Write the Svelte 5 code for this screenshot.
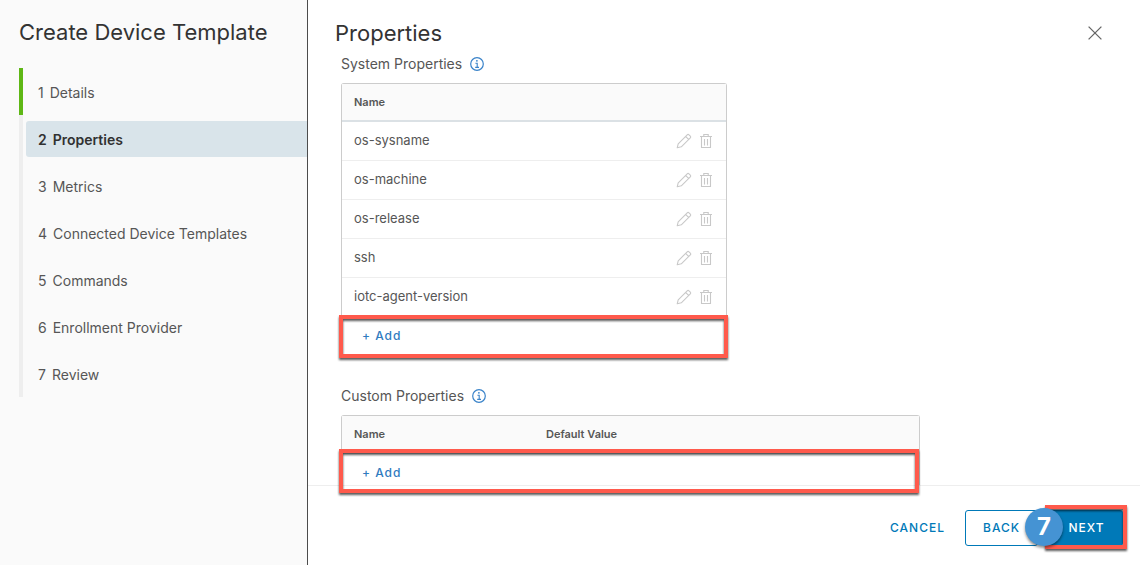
<script>
  const steps = [
    'Details',
    'Properties',
    'Metrics',
    'Connected Device Templates',
    'Commands',
    'Enrollment Provider',
    'Review'
  ];
  let current = $state(1);
  const systemProperties = ['os-sysname', 'os-machine', 'os-release', 'ssh', 'iotc-agent-version'];
</script>

{#snippet info(label)}
  <button class="icon info" aria-label={label}>
    <svg width="14" height="14" viewBox="0 0 14 14" fill="none" stroke="currentColor">
      <circle cx="7" cy="7" r="6.3" stroke-width="1.2" />
      <path d="M5.4 6.2H7.2V10.3M5.2 10.4H9" stroke-width="1.1" />
      <circle cx="6.9" cy="3.8" r=".9" fill="currentColor" stroke="none" />
    </svg>
  </button>
{/snippet}

<div class="wizard">
  <aside>
    <h1>Create Device Template</h1>
    <nav aria-label="Steps">
      <ol>
        {#each steps as step, i}
          <li class:done={i < current}>
            <button
              class="step"
              class:active={i === current}
              aria-current={i === current ? 'step' : undefined}
              onclick={() => (current = i)}
            >
              <span>{i + 1}</span><span>{step}</span>
            </button>
          </li>
        {/each}
      </ol>
    </nav>
  </aside>

  <main>
    <header>
      <h2>Properties</h2>
      <button class="icon close" aria-label="Close">
        <svg width="14" height="14" viewBox="0 0 14 14" fill="none" stroke="currentColor" stroke-width="1.3">
          <path d="M.6.6 13.4 13.4M13.4.6.6 13.4" />
        </svg>
      </button>
    </header>

    <div class="content">
      <section class="system">
        <h3>System Properties {@render info('About system properties')}</h3>
        <div class="grid">
          <table>
            <thead>
              <tr><th colspan="2">Name</th></tr>
            </thead>
            <tbody>
              {#each systemProperties as name}
                <tr>
                  <td>{name}</td>
                  <td class="actions">
                    <button class="icon" aria-label="Edit {name}">
                      <svg width="16" height="16" viewBox="0 0 16 16" fill="none" stroke="currentColor" stroke-width="1.1" stroke-linejoin="round">
                        <path d="M1.2 14.8 2.2 10.8 11.2 1.8Q12.1 .9 13 1.8L14.3 3.1Q15.2 4 14.3 4.9L5.3 13.8ZM9.6 3.4 12.6 6.4" />
                      </svg>
                    </button>
                    <button class="icon" aria-label="Delete {name}">
                      <svg width="14" height="16" viewBox="0 0 14 16" fill="none" stroke="currentColor" stroke-width="1.1">
                        <path d="M1 3.5H13M2.5 3.5V14.5H11.5V3.5M4.8 3.5V1.5H9.2V3.5M5.5 6V12.5M8.5 6V12.5" />
                      </svg>
                    </button>
                  </td>
                </tr>
              {/each}
            </tbody>
          </table>
          <div class="add-row">
            <button class="add">+ Add</button>
            <div class="highlight"></div>
          </div>
        </div>
      </section>

      <section class="custom">
        <h3>Custom Properties {@render info('About custom properties')}</h3>
        <div class="grid">
          <table>
            <thead>
              <tr><th class="third">Name</th><th>Default Value</th></tr>
            </thead>
          </table>
          <div class="add-row">
            <button class="add">+ Add</button>
            <div class="highlight"></div>
          </div>
        </div>
      </section>
    </div>

    <footer>
      <button class="btn link">CANCEL</button>
      <button class="btn outline">BACK</button>
      <div class="next">
        <button class="btn primary">NEXT</button>
        <div class="highlight"></div>
        <span class="badge">7</span>
      </div>
    </footer>
  </main>
</div>

<style>
  :global(body) {
    margin: 0;
    background: #fff;
  }
  .wizard {
    display: flex;
    min-height: 100vh;
    font-family: Inter, 'Open Sans', sans-serif;
    font-size: 14px;
    line-height: 24px;
    color: #565656;
  }
  button {
    font: inherit;
    color: inherit;
    background: none;
    border: 0;
    padding: 0;
    cursor: pointer;
  }
  h1,
  h2,
  h3,
  ol {
    margin: 0;
    padding: 0;
    font-weight: 400;
    list-style: none;
  }
  h1,
  h2 {
    font-size: 22px;
    line-height: 24px;
    color: #333;
  }
  svg {
    display: block;
  }

  aside {
    box-sizing: border-box;
    flex: 0 0 308px;
    padding-top: 20px;
    background: #fafafa;
    border-right: 1px solid #4c4c4c;
  }
  h1 {
    padding-left: 19px;
    white-space: nowrap;
  }
  ol {
    margin: 24px 0 0 19px;
  }
  li {
    display: flex;
    align-items: center;
    box-sizing: border-box;
    height: 47px;
    padding-left: 3px;
    border-left: 4px solid #eee;
  }
  li.done {
    border-color: #5eb715;
  }
  .step {
    display: flex;
    flex: 1;
    gap: 6px;
    padding: 7px 12px 5px;
    text-align: left;
    border-radius: 3px 0 0 3px;
  }
  .step.active {
    background: #d9e4ea;
    color: #313131;
    font-weight: 600;
  }

  main {
    display: flex;
    flex: 1;
    flex-direction: column;
    min-width: 0;
  }
  header {
    display: flex;
    align-items: center;
    justify-content: space-between;
    padding: 21px 38px 0 27px;
  }
  .icon {
    display: inline-flex;
  }
  .close {
    color: #666;
  }
  .content {
    flex: 1;
    padding: 7px 24px 0 33px;
  }
  h3 {
    display: flex;
    align-items: center;
    gap: 8px;
    font-size: 14px;
  }
  .info {
    color: #3a83c9;
  }
  .grid {
    margin-top: 7px;
    border: 1px solid #ccc;
    border-bottom: 0;
    border-radius: 3px 3px 0 0;
  }
  .system {
    max-width: 386px;
  }
  .custom {
    max-width: 579px;
    margin-top: 27px;
  }
  table {
    width: 100%;
    border-collapse: separate;
    border-spacing: 0;
  }
  th,
  td {
    box-sizing: border-box;
    padding: 0 12px;
    text-align: left;
    font-size: 13px;
  }
  th {
    height: 38px;
    font-size: 11px;
    font-weight: 600;
    background: #fafafa;
    border-bottom: 2px solid #dbe1e5;
  }
  .third {
    width: 192px;
  }
  td {
    height: 39px;
    padding-bottom: 2px;
    border-bottom: 1px solid #eee;
  }
  .actions {
    padding: 0 13px;
    line-height: 0;
    text-align: right;
    color: #c8c8c8;
  }
  .actions .icon + .icon {
    margin-left: 3px;
  }
  .add-row {
    position: relative;
    padding: 6px 20px 0;
  }
  .system .add-row {
    padding-bottom: 9px;
  }
  .add,
  .btn {
    font-size: 12px;
    font-weight: 500;
    letter-spacing: 1px;
  }
  .add {
    color: #2f7bbf;
  }
  .highlight {
    position: absolute;
    inset: -2px -2px -1px -3px;
    border: 4px solid #ff5a4c;
    filter: drop-shadow(0 2px 1px rgba(0, 0, 0, 0.65));
    pointer-events: none;
  }
  .custom .highlight {
    inset: -5px 0 -8px -3px;
  }

  footer {
    display: flex;
    align-items: flex-start;
    justify-content: flex-end;
    box-sizing: border-box;
    height: 80px;
    padding: 24px 17px 0;
    border-top: 1px solid #eee;
  }
  .btn {
    box-sizing: border-box;
    min-width: 73px;
    height: 36px;
    padding: 0 15px;
    border: 1px solid transparent;
    border-radius: 3px;
    color: #0079b8;
  }
  .btn.link {
    margin-right: 4px;
  }
  .btn.outline {
    border-color: #0079b8;
    margin-right: 12px;
  }
  .btn.primary {
    color: #fff;
    background: #0079b8;
  }
  .next {
    position: relative;
  }
  .next .highlight {
    inset: -5px -4px -3px -5px;
  }
  .badge {
    position: absolute;
    left: -25px;
    top: -2px;
    width: 38px;
    height: 38px;
    border-radius: 50%;
    background: #4593d3;
    box-shadow: 0 2px 3px rgba(0, 0, 0, 0.45);
    color: #fff;
    font-size: 24px;
    font-weight: 700;
    line-height: 38px;
    text-align: center;
  }
</style>
